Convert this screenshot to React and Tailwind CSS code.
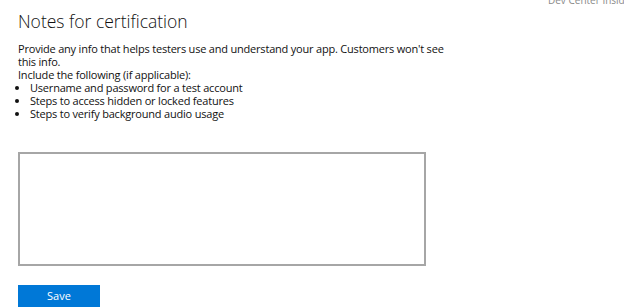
export default function App() {
  return (
    <div className="relative w-[624px] h-[308px] overflow-hidden bg-white font-['Open_Sans',sans-serif] text-[#000]">
      <div className="absolute left-[548px] top-[-7px] text-[10px] text-[#8a8a8a] whitespace-nowrap">
        Dev Center Insider
      </div>
      <div className="pl-[18px] pt-[10px]">
        <h1 className="text-[17.5px] font-light leading-[22px] text-[#111]">Notes for certification</h1>
        <div className="mt-[10px] text-[11px] leading-[13px] tracking-[-0.2px] text-[#111] w-[432px]">
          <p>Provide any info that helps testers use and understand your app. Customers won't see this info.</p>
          <p>Include the following (if applicable):</p>
          <ul className="list-disc pl-[12px]">
            <li>Username and password for a test account</li>
            <li>Steps to access hidden or locked features</li>
            <li>Steps to verify background audio usage</li>
          </ul>
        </div>
        <textarea className="block mt-[32px] w-[408px] h-[114px] border-2 border-[#a6a6a6] resize-none outline-none" />
        <button className="block mt-[19px] w-[82px] h-[22px] bg-[#0078d7] text-white text-[11px] leading-[22px]">Save</button>
      </div>
    </div>
  );
}
